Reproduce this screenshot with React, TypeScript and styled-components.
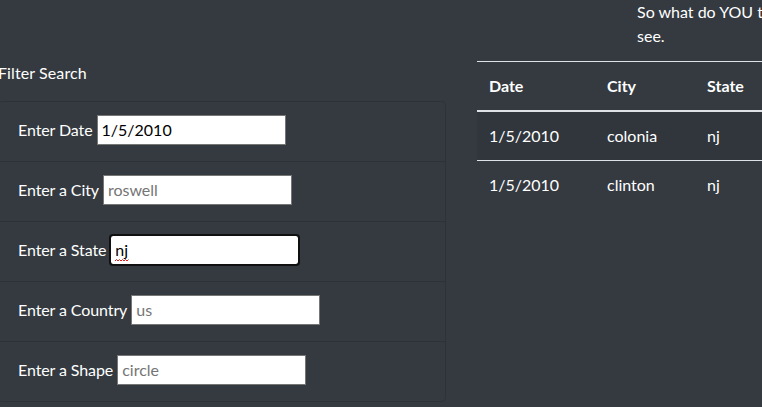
import React from "react";
import styled, { createGlobalStyle } from "styled-components";

const Global = createGlobalStyle`
  html, body { margin: 0; padding: 0; }
  body {
    background: #343a40;
    color: #ffffff;
    font-family: Lato, "Open Sans", "Liberation Sans", sans-serif;
    font-size: 16px;
    line-height: 24px;
    overflow: hidden;
    width: 762px;
    height: 407px;
  }
`;

const Page = styled.div`
  display: flex;
  align-items: flex-start;
  gap: 31px;
  margin-left: -2px;
  width: 1000px;
`;

const LeftCol = styled.section`
  width: 448px;
  flex: none;
  padding-top: 61px;
`;

const Heading = styled.div`
  height: 24px;
  margin-bottom: 16px;
  letter-spacing: 0.1px;
`;

const List = styled.ul`
  list-style: none;
  margin: 0;
  padding: 0;
  border: 1px solid rgba(0, 0, 0, 0.125);
  border-radius: 4px;
`;

const Item = styled.li<{ $first?: boolean }>`
  box-sizing: border-box;
  display: flex;
  align-items: center;
  gap: 4px;
  height: ${(p) => (p.$first ? "59px" : "60px")};
  padding: 0 19px 4px;
  border-top: ${(p) => (p.$first ? "none" : "1px solid rgba(0, 0, 0, 0.125)")};
`;

const Label = styled.label`
  white-space: nowrap;
  letter-spacing: -0.1px;
`;

const Field = styled.span`
  position: relative;
  display: inline-flex;
`;

const Input = styled.input<{ $focused?: boolean }>`
  box-sizing: border-box;
  width: 189px;
  height: 30px;
  margin: 0;
  padding: 1px 4px;
  border: 1px solid #767676;
  border-radius: ${(p) => (p.$focused ? "3px" : "0")};
  background: #ffffff;
  color: #000000;
  font-family: inherit;
  font-size: 16px;
  outline: ${(p) => (p.$focused ? "2px solid #101010" : "none")};
  outline-offset: -1px;
  box-shadow: ${(p) => (p.$focused ? "inset 0 0 0 2px #ffffff" : "none")};
  &::placeholder { color: #757575; opacity: 1; }
`;

const Squiggle = styled.svg`
  position: absolute;
  left: 5px;
  top: 24px;
  width: 14px;
  height: 3px;
  pointer-events: none;
`;

const RightCol = styled.section`
  flex: none;
  width: 500px;
`;

const Intro = styled.p`
  margin: 0 0 13px 160px;
  white-space: nowrap;
  height: 48px;
`;

const Table = styled.table`
  border-collapse: collapse;
  table-layout: fixed;
  width: 500px;
`;

const Th = styled.th`
  text-align: left;
  font-weight: 700;
  padding: 12px;
  border-top: 1px solid #dee2e6;
  border-bottom: 2px solid #dee2e6;
  white-space: nowrap;
`;

const Row = styled.tr<{ $striped?: boolean }>`
  background: ${(p) => (p.$striped ? "rgba(0, 0, 0, 0.06)" : "transparent")};
`;

const Td = styled.td`
  padding: 12px;
  border-top: 1px solid #dee2e6;
  white-space: nowrap;
`;

const filters = [
  { label: "Enter Date", value: "1/5/2010", placeholder: "" },
  { label: "Enter a City", value: "", placeholder: "roswell" },
  { label: "Enter a State", value: "nj", placeholder: "", focused: true },
  { label: "Enter a Country", value: "", placeholder: "us" },
  { label: "Enter a Shape", value: "", placeholder: "circle" },
];

const rows = [
  { date: "1/5/2010", city: "colonia", state: "nj" },
  { date: "1/5/2010", city: "clinton", state: "nj" },
];

export default function App() {
  return (
    <>
      <Global />
      <Page>
        <LeftCol>
          <Heading>Filter Search</Heading>
          <List>
            {filters.map((f, i) => (
              <Item key={f.label} $first={i === 0}>
                <Label htmlFor={`f${i}`}>{f.label}</Label>
                <Field>
                  <Input
                    id={`f${i}`}
                    type="text"
                    defaultValue={f.value}
                    placeholder={f.placeholder}
                    $focused={f.focused}
                    spellCheck={false}
                  />
                  {f.focused && (
                    <Squiggle viewBox="0 0 14 3">
                      <path
                        d="M0 2 L1.5 0.5 L3 2 L4.5 0.5 L6 2 L7.5 0.5 L9 2 L10.5 0.5 L12 2 L13.5 0.5"
                        fill="none"
                        stroke="#e0201a"
                        strokeWidth="1"
                      />
                    </Squiggle>
                  )}
                </Field>
              </Item>
            ))}
          </List>
        </LeftCol>
        <RightCol>
          <Intro>
            So what do YOU think? Filter the data below to find what you want to
            <br />
            see.
          </Intro>
          <Table>
            <colgroup>
              <col style={{ width: 118 }} />
              <col style={{ width: 100 }} />
              <col style={{ width: 100 }} />
              <col style={{ width: 182 }} />
            </colgroup>
            <thead>
              <tr>
                <Th>Date</Th>
                <Th>City</Th>
                <Th>State</Th>
                <Th>Country</Th>
              </tr>
            </thead>
            <tbody>
              {rows.map((r, i) => (
                <Row key={r.city} $striped={i === 0}>
                  <Td>{r.date}</Td>
                  <Td>{r.city}</Td>
                  <Td>{r.state}</Td>
                  <Td>us</Td>
                </Row>
              ))}
            </tbody>
          </Table>
        </RightCol>
      </Page>
    </>
  );
}
